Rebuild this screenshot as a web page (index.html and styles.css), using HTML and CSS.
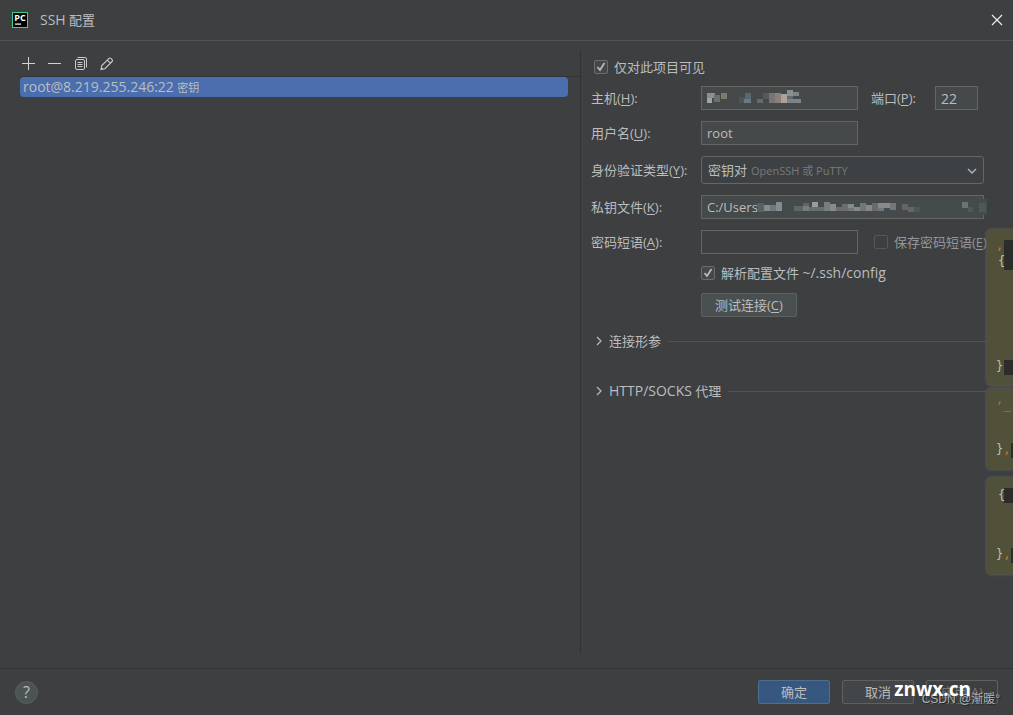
FILE: index.html
```html
<!DOCTYPE html>
<html lang="zh-CN">
<head>
<meta charset="utf-8">
<title>SSH 配置</title>
<link rel="stylesheet" href="styles.css">
</head>
<body>
<div class="dialog">
  <header class="titlebar">
    <svg class="app-icon" width="16" height="16" viewBox="0 0 16 16" aria-hidden="true">
      <rect x="0.5" y="0.5" width="15" height="15" fill="#000" stroke="#3fcf8c"/>
      <text class="app-icon-text" x="8" y="9" text-anchor="middle">PC</text>
      <rect x="3" y="11.5" width="6" height="1.2" fill="#fff"/>
    </svg>
    <h1 class="title"><span class="latin">SSH</span> 配置</h1>
    <button class="icon-button close" type="button" aria-label="关闭">
      <svg width="12" height="12" viewBox="0 0 12 12"><path d="M1 1l10 10M11 1L1 11" stroke="#f2f2f2" stroke-width="1.1"/></svg>
    </button>
  </header>

  <main class="content">
    <section class="connections">
      <div class="toolbar">
        <button class="icon-button" type="button" aria-label="添加">
          <svg width="16" height="16" viewBox="0 0 16 16"><path d="M8.5 2v13M2 8.5h13" stroke="#d0d2d3" fill="none"/></svg>
        </button>
        <button class="icon-button" type="button" aria-label="删除">
          <svg width="16" height="16" viewBox="0 0 16 16"><path d="M2 8.5h13" stroke="#d0d2d3" fill="none"/></svg>
        </button>
        <button class="icon-button" type="button" aria-label="复制">
          <svg width="16" height="16" viewBox="0 0 16 16" fill="none" stroke="#c8cacb"><rect x="3.500" y="4.500" width="9" height="10" rx="1.500"/><path d="M5.500 2.500H13a1.500 1.500 0 0 1 1.500 1.500V12.500M5.500 7.500h5M5.500 9.500h5M5.500 11.500h5"/></svg>
        </button>
        <button class="icon-button" type="button" aria-label="编辑">
          <svg width="16" height="16" viewBox="0 0 16 16" fill="none" stroke="#c8cacb" stroke-width="1.1"><path d="M3 14.500l.8-4L11 3.400a1.300 1.300 0 0 1 1.900 0l1.200 1.200a1.300 1.300 0 0 1 0 1.900L6.900 13.700zM9.300 5.100l3.100 3.100M3.300 12.700l1.500 1.500"/></svg>
        </button>
      </div>
      <ul class="list">
        <li class="list-item"><span class="latin">root@8.219.255.246:22</span> <small class="list-note">密钥</small></li>
      </ul>
    </section>

    <form class="settings">
      <label class="check"><input class="box" type="checkbox" checked><span>仅对此项目可见</span></label>

      <div class="fields">
        <label for="host">主机(<u>H</u>):</label>
        <div class="row">
          <div class="masked medium">
            <input class="field" id="host" type="text">
            <svg class="mosaic" width="96" height="18" viewBox="0 0 96 18" aria-hidden="true">
              <path fill="#8a9092" d="M1 4h8v5H1z"/><path fill="#a2a4a3" d="M1 9h5v5H1z"/><path fill="#6a7072" d="M8 6h6v7H8z"/><path fill="#81796a" d="M15 4h6v6h-6z"/>
              <path fill="#4b555e" d="M33 8h6v6h-6z"/><path fill="#596673" d="M39 4h6v6h-6z"/><path fill="#6c7880" d="M38 10h7v4h-7z"/><path fill="#656a6c" d="M51 10h6v4h-6z"/><path fill="#53595c" d="M57 4h6v6h-6z"/>
              <path fill="#777473" d="M63 4h6v10h-6z"/><path fill="#8c807b" d="M69 4h6v10h-6z"/><path fill="#aaa39b" d="M75 5h6v9h-6z"/><path fill="#899090" d="M81 1h6v6h-6z"/><path fill="#646b6e" d="M81 7h6v5h-6z"/><path fill="#7d8486" d="M87 3h6v4h-6zM81 10h14v4H81z"/>
            </svg>
          </div>
          <label class="port-label" for="port">端口(<u>P</u>):</label>
          <input class="field port" id="port" type="text" value="22">
        </div>

        <label for="user">用户名(<u>U</u>):</label>
        <div class="row"><input class="field medium" id="user" type="text" value="root"></div>

        <label for="auth">身份验证类型(<u>Y</u>):</label>
        <div class="combo">
          <select class="select" id="auth"><option>密钥对</option><option>密码</option></select>
          <span class="combo-hint">OpenSSH 或 PuTTY</span>
          <svg class="combo-arrow" width="10" height="6" viewBox="0 0 10 6"><path d="M1 1l4 4 4-4" fill="none" stroke="#b4b7b9" stroke-width="1.3"/></svg>
        </div>

        <label for="key">私钥文件(<u>K</u>):</label>
        <div class="masked wide">
          <input class="field" id="key" type="text" value="C:/Users">
          <svg class="mosaic key-mosaic" width="230" height="20" viewBox="0 0 230 20" aria-hidden="true">
            <path fill="#454b4d" d="M2 2h228v16H2z"/>
            <path fill="#5b5f61" d="M0 6h7v9H0z"/><path fill="#858c8f" d="M7 8h6v6H7zM19 5h6v9h-6z"/><path fill="#70777a" d="M13 8h6v6h-6z"/>
            <path fill="#5f6567" d="M37 9h9v5h-9zM46 6h6v8h-6z"/><path fill="#777c7e" d="M46 9h6v5h-6zM67 5h6v9h-6z"/><path fill="#9a9d9d" d="M55 5h6v6h-6z"/><path fill="#686e70" d="M52 10h9v4h-9zM61 10h6v4h-6z"/><path fill="#898b8a" d="M73 7h6v7h-6z"/><path fill="#6b6e70" d="M79 10h6v4h-6zM85 7h6v7h-6z"/>
            <path fill="#858a8d" d="M91 7h6v4h-6zM97 10h6v4h-6z"/><path fill="#74777a" d="M91 11h6v3h-6zM103 6h6v8h-6z"/><path fill="#898786" d="M109 8h6v6h-6z"/><path fill="#676b6e" d="M115 6h6v8h-6z"/><path fill="#888a8e" d="M121 6h12v5h-12z"/><path fill="#73777b" d="M121 11h6v3h-6zM133 6h6v7h-6z"/><path fill="#666565" d="M145 7h6v6h-6zM151 10h6v5h-6z"/><path fill="#515759" d="M157 10h6v5h-6z"/><path fill="#697376" d="M205 5h6v6h-6z"/><path fill="#505759" d="M211 10h5v5h-5zM222 6h7v9h-7z"/>
          </svg>
        </div>

        <label for="phrase">密码短语(<u>A</u>):</label>
        <div class="row">
          <input class="field plain medium" id="phrase" type="password">
          <label class="check save"><input class="box" type="checkbox" disabled><span>保存密码短语(<u>E</u>)</span></label>
        </div>

        <label class="check second"><input class="box" type="checkbox" checked><span>解析配置文件 <span class="latin">~/.ssh/config</span></span></label>
        <button class="button second" type="button">测试连接(<u>C</u>)</button>
      </div>

      <button class="section" type="button" aria-expanded="false">
        <svg width="8" height="10" viewBox="0 0 8 10"><path d="M2 1l4 4-4 4" fill="none" stroke="#b4b7b9" stroke-width="1.3"/></svg>
        <span>连接形参</span>
      </button>
      <button class="section" type="button" aria-expanded="false">
        <svg width="8" height="10" viewBox="0 0 8 10"><path d="M2 1l4 4-4 4" fill="none" stroke="#b4b7b9" stroke-width="1.3"/></svg>
        <span><span class="latin">HTTP/SOCKS</span> 代理</span>
      </button>
    </form>
  </main>

  <footer class="footer">
    <button class="help" type="button" aria-label="帮助">?</button>
    <button class="button action primary" type="button">确定</button>
    <button class="button action" type="button">取消</button>
    <button class="button action" type="button" disabled>应用(<u>A</u>)</button>
  </footer>

  <aside class="behind" aria-hidden="true">
    <div class="code code-a"><i class="shade s1"></i><i class="shade s2"></i><span class="comma c1">,</span><span class="brace b1">{</span><span class="brace b2">}</span></div>
    <div class="code code-b"><i class="shade s3"></i><span class="comma c2">,</span><span class="brace b3">_</span><span class="brace b4">}<em>,</em></span></div>
    <div class="code code-c"><i class="shade s4"></i><i class="shade s5"></i><span class="brace b5">{</span><span class="brace b6">}<em>,</em></span></div>
  </aside>
  <span class="credit">CSDN @渐暖°</span>
  <span class="site">znwx.cn</span>
</div>
</body>
</html>
```
FILE: styles.css
```css
* { box-sizing: border-box; }

body {
  margin: 0;
  background: #3d3f41;
  color: #bbbdbf;
  font: 13px/16px "Open Sans", "Noto Sans CJK SC", sans-serif;
}

button, input, select { font: inherit; color: inherit; margin: 0; }
button { padding: 0; }
svg { display: block; }
u { text-underline-offset: 2px; }
.latin { font-size: 14px; }

.dialog {
  position: relative;
  display: flex;
  flex-direction: column;
  min-height: 100vh;
  overflow: hidden;
}

.titlebar {
  display: flex;
  align-items: center;
  height: 41px;
  padding: 0 10px 0 12px;
  gap: 12px;
  border-bottom: 1px solid #4e5254;
}
.app-icon-text { font: bold 9px "Open Sans", sans-serif; fill: #fff; }
.title { margin: 0; font-size: 13px; font-weight: 400; }
.icon-button { background: none; border: 0; }
.close { margin-left: auto; }

.content {
  flex: 1;
  display: grid;
  grid-template-columns: 581fr 432fr;
  padding: 10px 0 14px;
}

.connections { border-right: 1px solid #313335; }
.toolbar {
  display: flex;
  align-items: center;
  gap: 10px;
  height: 26px;
  margin-left: 20px;
  padding-bottom: 2px;
  border-bottom: 1px solid #323436;
}
.list { list-style: none; margin: 0 12px 0 20px; padding: 0; }
.list-item {
  height: 20px;
  padding-left: 3px;
  border-radius: 4px;
  background: #4b6eaf;
  line-height: 20px;
}
.list-note { font-size: 11px; }

.settings { padding: 8px 27px 0 10px; white-space: nowrap; min-width: 0; }
.check { display: flex; align-items: center; gap: 6px; height: 15px; }
.settings > .check { padding-left: 3px; margin-bottom: 12px; }
.fields > .check { margin-bottom: 2px; }
.box {
  appearance: none;
  flex: none;
  width: 14px;
  height: 14px;
  border: 1px solid #6b6e70;
  border-radius: 2px;
  background: #43494a;
}
.box:checked {
  background: #43494a url("data:image/svg+xml,%3Csvg xmlns='http://www.w3.org/2000/svg' viewBox='0 0 12 12'%3E%3Cpath d='M2.500 6l2.500 3 4.500-7' fill='none' stroke='%23b8babb' stroke-width='1.800'/%3E%3C/svg%3E") center / 12px 12px;
}
.box:disabled { background: none; border-color: #55585a; }

.fields {
  display: grid;
  grid-template-columns: 110px 1fr;
  row-gap: 11px;
  align-items: center;
}
.row { display: flex; align-items: center; }
.field {
  display: block;
  width: 100%;
  height: 24px;
  padding: 0 5px;
  border: 1px solid #646666;
  border-radius: 0;
  background: #45494a;
}
.port { font-size: 14px; }
.plain { background: none; }
.medium { width: 157px; flex: none; }
.wide { width: 283px; }
.port-label { width: 64px; margin-left: 13px; }
.port { width: 43px; }
.save { margin-left: 16px; color: #949698; }
.second { grid-column: 2; justify-self: start; }

.masked { position: relative; }
.mosaic { position: absolute; left: 5px; top: 3px; }
.key-mosaic { left: 56px; top: 2px; }

.combo { position: relative; width: 283px; }
.select {
  appearance: none;
  display: block;
  width: 100%;
  height: 28px;
  padding: 0 6px;
  border: 1px solid #646668;
  border-radius: 3px;
  background: #3d4143;
}
.combo-hint {
  position: absolute;
  left: 50px;
  top: 7px;
  font-size: 11px;
  color: #777a7c;
  pointer-events: none;
}
.combo-arrow { position: absolute; right: 7px; top: 12px; pointer-events: none; }

.button {
  height: 24px;
  padding: 0 13px;
  border: 1px solid #5e6162;
  border-radius: 2px;
  background: #4a4f50;
}

.section {
  display: flex;
  align-items: center;
  gap: 6px;
  width: 100%;
  height: 20px;
  margin-top: 14px;
  padding-left: 4px;
  border: 0;
  background: none;
}
.section + .section { margin-top: 30px; }
.section::after { content: ""; flex: 1; height: 1px; margin-left: 1px; background: #515456; }

.footer {
  display: flex;
  align-items: center;
  gap: 12px;
  height: 47px;
  padding: 0 15px;
  border-top: 1px solid #313335;
}
.help {
  width: 23px;
  height: 23px;
  margin-right: auto;
  border: 1px solid #5a5f60;
  border-radius: 50%;
  background: #4c5354;
  font-size: 16px;
  line-height: 20px;
}
.action { width: 72px; padding: 0; background: #434648; }
.action:disabled { color: #777; background: none; }
.primary { background: #365880; border-color: #4c708c; }

/* Editor fragments showing beside the dialog */
.behind { position: absolute; right: 0; top: 0; width: 26px; font: 12px/14px "DejaVu Sans Mono", monospace; }
.code {
  position: absolute;
  left: 0;
  width: 26px;
  background: #515038;
  border-radius: 4px 0 0 4px;
  box-shadow: 0 0 3px 1px #5b5c55;
}
.code-a { top: 230px; height: 155px; }
.code-b { top: 389px; height: 80px; }
.code-c { top: 478px; height: 96px; }
.shade { position: absolute; right: 0; width: 9px; background: #2b2c2c; }
.s1 { top: 10px; height: 30px; }
.s2 { top: 130px; height: 15px; }
.s3 { top: 54px; height: 15px; width: 2px; }
.s4 { top: 10px; height: 15px; }
.s5 { top: 70px; height: 15px; width: 2px; }
.brace, .comma { position: absolute; left: 9px; color: #b7c4b4; }
.comma, .code em { color: #cc7832; font-style: normal; }
.c1 { top: 8px; }
.c2 { top: 3px; color: #8c8064; }
.b1 { left: 11px; top: 24px; }
.b2 { top: 129px; }
.b3 { left: 17px; top: 9px; color: #8c9070; }
.b4 { top: 53px; }
.b5 { left: 11px; top: 10px; }
.b6 { top: 69px; }

/* Watermarks laid over the footer */
.credit {
  position: absolute;
  right: 13px;
  bottom: 8px;
  font: 12px/16px "Liberation Sans", "Noto Sans CJK SC", sans-serif;
  color: #b0b2b3;
  text-shadow: 1px 1px 1px #1d1e1f;
}
.site {
  position: absolute;
  right: 42px;
  bottom: 15px;
  font: bold 19px/22px "Open Sans", sans-serif;
  color: #fff;
}
```
